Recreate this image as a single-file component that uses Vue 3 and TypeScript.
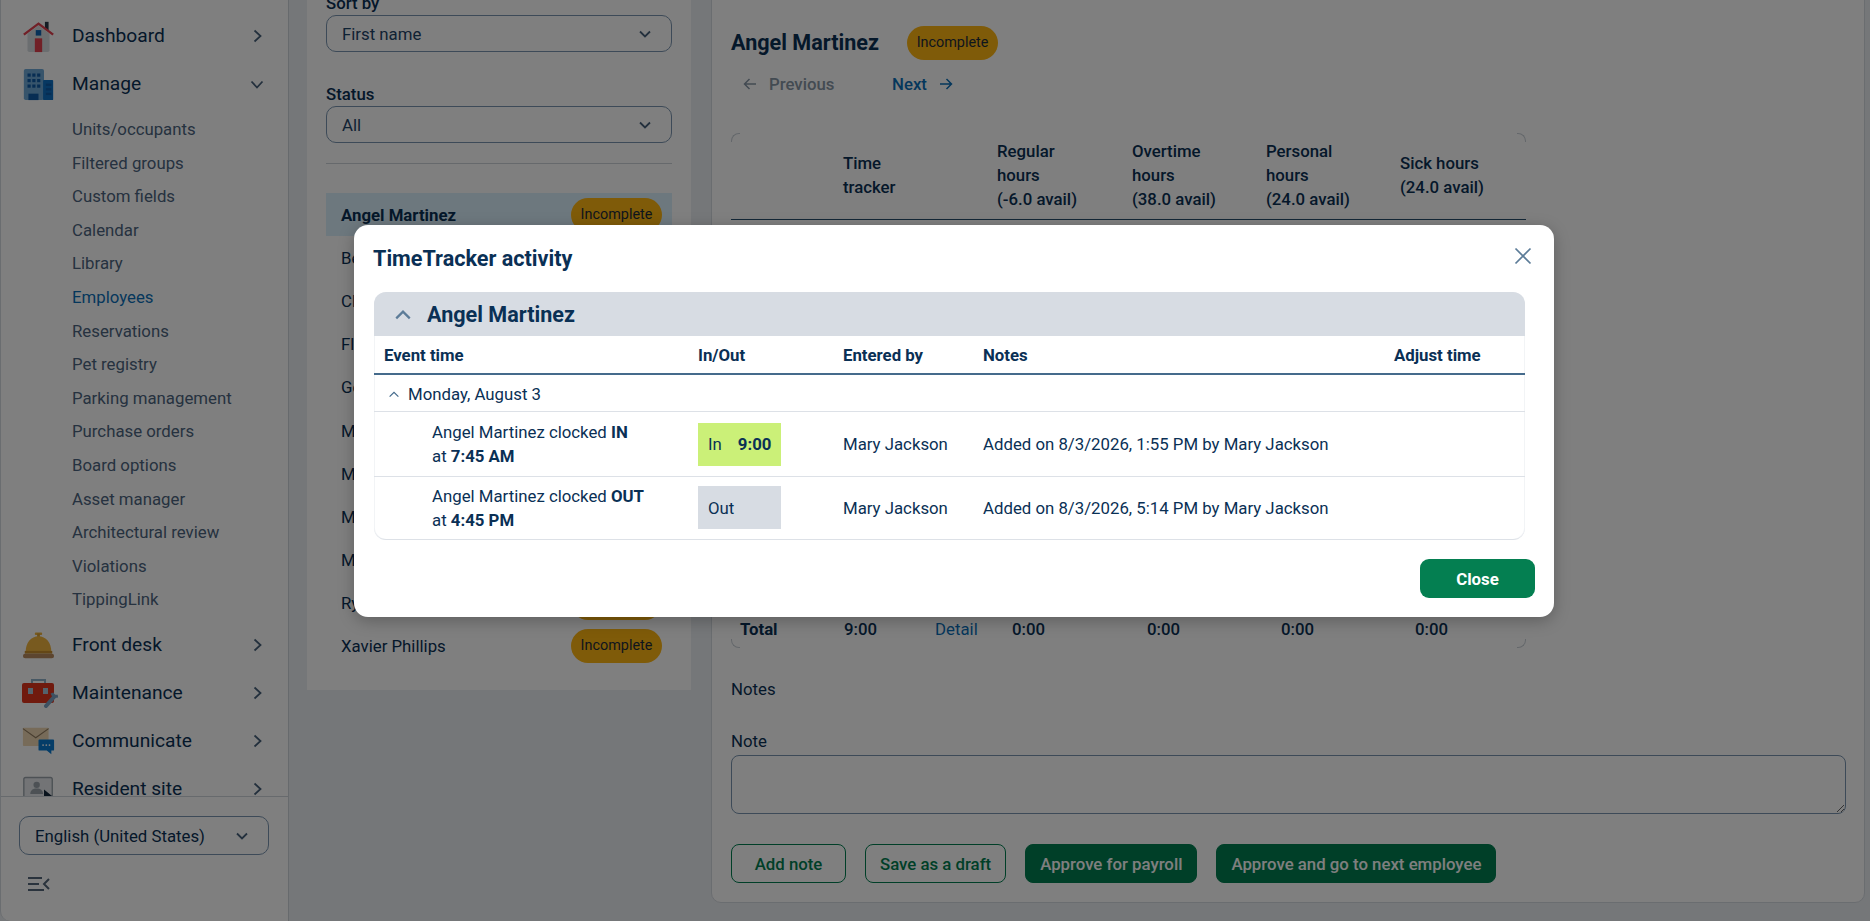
<script setup lang="ts">
const subItems = [
  'Units/occupants', 'Filtered groups', 'Custom fields', 'Calendar', 'Library', 'Employees',
  'Reservations', 'Pet registry', 'Parking management', 'Purchase orders', 'Board options',
  'Asset manager', 'Architectural review', 'Violations', 'TippingLink'
]

const employees = [
  { name: 'Angel Martinez', badge: true },
  { name: 'Beth Sanders', badge: false },
  { name: 'Claire Howard', badge: false },
  { name: 'Floyd Warren', badge: false },
  { name: 'George Evans', badge: false },
  { name: 'Maria Lopez', badge: false },
  { name: 'Mark Stevens', badge: false },
  { name: 'Mary Jackson', badge: false },
  { name: 'Mike Turner', badge: false },
  { name: 'Ryan Cooper', badge: true },
  { name: 'Xavier Phillips', badge: true }
]
</script>

<template>
  <div class="page">
    <aside class="sidebar">
      <nav class="nav">
        <a class="nav-item">
          <svg class="nav-icon" viewBox="0 0 36 36">
            <rect x="25" y="2" width="4" height="9" fill="#2a3a48" />
            <path d="M6 15 18 6l12 9v18a2 2 0 0 1-2 2H8a2 2 0 0 1-2-2z" fill="#d7dce1" />
            <path d="M2 16 18 4l16 12" fill="none" stroke="#e2404f" stroke-width="2.6" />
            <rect x="15" y="11" width="6" height="6" fill="#0f62b0" />
            <rect x="14" y="20" width="8" height="15" fill="#e2404f" />
          </svg>
          <span class="nav-label">Dashboard</span>
          <svg class="chev" viewBox="0 0 16 16"><path d="m5.500 2.500 6 5.500-6 5.500" /></svg>
        </a>
        <a class="nav-item">
          <svg class="nav-icon" viewBox="0 0 36 36">
            <rect x="2" y="1" width="22" height="34" rx="2" fill="#6fa9d6" />
            <rect x="23" y="13" width="11" height="22" rx="1" fill="#0f70c4" />
            <g fill="#0f5aa6">
              <rect x="6" y="6" width="3.500" height="3.500" /><rect x="11.200" y="6" width="3.500" height="3.500" /><rect x="16.500" y="6" width="3.500" height="3.500" />
              <rect x="6" y="12" width="3.500" height="3.500" /><rect x="11.200" y="12" width="3.500" height="3.500" /><rect x="16.500" y="12" width="3.500" height="3.500" />
              <rect x="6" y="18" width="3.500" height="3.500" /><rect x="11.200" y="18" width="3.500" height="3.500" /><rect x="16.500" y="18" width="3.500" height="3.500" />
              <rect x="7" y="28" width="11" height="7" />
              <rect x="26" y="17" width="6" height="2.500" /><rect x="26" y="22" width="6" height="2.500" /><rect x="26" y="27" width="6" height="2.500" />
            </g>
          </svg>
          <span class="nav-label">Manage</span>
          <svg class="chev" viewBox="0 0 16 16"><path d="m2.500 5.500 5.500 6 5.500-6" /></svg>
        </a>
        <ul class="sub-list">
          <li v-for="item in subItems" :key="item" :class="{ active: item === 'Employees' }">{{ item }}</li>
        </ul>
        <a class="nav-item">
          <svg class="nav-icon" viewBox="0 0 36 36">
            <rect x="14" y="5" width="8" height="2.500" rx="1" fill="#f0b53f" />
            <rect x="16.500" y="6" width="3" height="4" fill="#d9a033" />
            <path d="M4 26C4 16 10 9 18 9s14 7 14 17z" fill="#f0b53f" />
            <rect x="3" y="25" width="30" height="3" fill="#c98f2d" />
            <rect x="1" y="28" width="34" height="5" rx="2.500" fill="#b98a5e" />
          </svg>
          <span class="nav-label">Front desk</span>
          <svg class="chev" viewBox="0 0 16 16"><path d="m5.500 2.500 6 5.500-6 5.500" /></svg>
        </a>
        <a class="nav-item">
          <svg class="nav-icon wide" viewBox="0 0 36 30">
            <path d="M10 6V2h13v4" fill="none" stroke="#8fb0c9" stroke-width="2" />
            <rect x="0" y="5" width="32" height="20" rx="2" fill="#e0341d" />
            <rect x="6" y="10" width="5" height="6" fill="#a9c4d8" />
            <rect x="21" y="10" width="5" height="6" fill="#a9c4d8" />
            <path d="M24 28 32 19" stroke="#7ca3c4" stroke-width="4" stroke-linecap="round" />
            <path d="M30 15a4.500 4.500 0 0 0 6 3" fill="none" stroke="#7ca3c4" stroke-width="3" />
          </svg>
          <span class="nav-label">Maintenance</span>
          <svg class="chev" viewBox="0 0 16 16"><path d="m5.500 2.500 6 5.500-6 5.500" /></svg>
        </a>
        <a class="nav-item">
          <svg class="nav-icon" viewBox="0 0 36 36">
            <rect x="1" y="4" width="28" height="20" rx="1" fill="#efd7b2" />
            <path d="m1 5 14 10L29 5" fill="none" stroke="#8f7a5f" stroke-width="1.200" />
            <path d="M19 17h15a1 1 0 0 1 1 1v10a1 1 0 0 1-1 1h-2v4l-5-4h-8a1 1 0 0 1-1-1V18a1 1 0 0 1 1-1z" fill="#0a7ad0" />
            <circle cx="23" cy="23" r="1" fill="#fff" /><circle cx="26.500" cy="23" r="1" fill="#fff" /><circle cx="30" cy="23" r="1" fill="#fff" />
          </svg>
          <span class="nav-label">Communicate</span>
          <svg class="chev" viewBox="0 0 16 16"><path d="m5.500 2.500 6 5.500-6 5.500" /></svg>
        </a>
        <a class="nav-item">
          <svg class="nav-icon" viewBox="0 0 36 36">
            <rect x="2" y="6" width="31" height="22" rx="2" fill="#e6e9ec" stroke="#9aa3ab" stroke-width="1.500" />
            <circle cx="16" cy="14" r="3.500" fill="#9aa3ab" />
            <path d="M9 24c0-4 3-6 7-6s7 2 7 6z" fill="#9aa3ab" />
            <rect x="1" y="27" width="33" height="4" fill="#7c858d" />
            <path d="m24 19 11 9-5 1 3 5-3 1-3-5-3 3z" fill="#12263a" />
          </svg>
          <span class="nav-label">Resident site</span>
          <svg class="chev" viewBox="0 0 16 16"><path d="m5.500 2.500 6 5.500-6 5.500" /></svg>
        </a>
      </nav>
      <div class="side-footer">
        <div class="select lang">
          <span>English (United States)</span>
          <svg class="chev-sm" viewBox="0 0 16 16"><path d="m3 5.500 5 5 5-5" /></svg>
        </div>
        <svg class="collapse" viewBox="0 0 22 16">
          <path d="M0 2h14M0 8h11M0 14h16M21 3l-5 5 5 5" />
        </svg>
      </div>
    </aside>

    <section class="list-panel">
      <label class="field-label">Sort by</label>
      <div class="select">
        <span>First name</span>
        <svg class="chev-sm" viewBox="0 0 16 16"><path d="m3 5.500 5 5 5-5" /></svg>
      </div>
      <label class="field-label status-label">Status</label>
      <div class="select">
        <span>All</span>
        <svg class="chev-sm" viewBox="0 0 16 16"><path d="m3 5.500 5 5 5-5" /></svg>
      </div>
      <hr class="divider" />
      <ul class="employees">
        <li v-for="(emp, i) in employees" :key="emp.name" :class="{ selected: i === 0 }">
          <span>{{ emp.name }}</span>
          <span v-if="emp.badge" class="badge">Incomplete</span>
        </li>
      </ul>
    </section>

    <main class="detail">
      <div class="title-row">
        <h1>Angel Martinez</h1>
        <span class="badge">Incomplete</span>
      </div>
      <div class="pager">
        <a class="prev">
          <svg viewBox="0 0 16 16"><path d="M14 8H2.500M7.500 3l-5 5 5 5" /></svg>
          Previous
        </a>
        <a class="next">
          Next
          <svg viewBox="0 0 16 16"><path d="M2 8h11.500M8.500 3l5 5-5 5" /></svg>
        </a>
      </div>

      <div class="hours">
        <i class="corner tl"></i><i class="corner tr"></i><i class="corner bl"></i><i class="corner br"></i>
        <div class="hours-head">
          <span></span>
          <span>Time<br />tracker</span>
          <span>Regular<br />hours<br />(-6.0 avail)</span>
          <span>Overtime<br />hours<br />(38.0 avail)</span>
          <span>Personal<br />hours<br />(24.0 avail)</span>
          <span>Sick hours<br />(24.0 avail)</span>
        </div>
        <div class="hours-body"></div>
        <div class="hours-row">
          <span class="total-label">Total</span>
          <span class="tracker"><b>9:00</b><a>Detail</a></span>
          <span>0:00</span><span>0:00</span><span>0:00</span><span>0:00</span>
        </div>
      </div>

      <p class="notes-title">Notes</p>
      <label class="note-label">Note</label>
      <textarea class="note"></textarea>
      <div class="actions">
        <button class="btn outline add">Add note</button>
        <button class="btn outline">Save as a draft</button>
        <button class="btn solid">Approve for payroll</button>
        <button class="btn solid">Approve and go to next employee</button>
      </div>
    </main>

    <div class="overlay">
      <div class="modal">
        <header class="modal-head">
          <h2>TimeTracker activity</h2>
          <svg class="close-x" viewBox="0 0 16 16"><path d="m2 2 12 12M14 2 2 14" /></svg>
        </header>
        <div class="activity">
          <div class="person">
            <svg viewBox="0 0 16 16"><path d="m2 11 6-6 6 6" /></svg>
            <span>Angel Martinez</span>
          </div>
          <div class="grid grid-head">
            <span>Event time</span>
            <span>In/Out</span>
            <span>Entered by</span>
            <span>Notes</span>
            <span>Adjust time</span>
          </div>
          <div class="day">
            <svg viewBox="0 0 16 16"><path d="m3 11 5-5 5 5" /></svg>
            <span>Monday, August 3</span>
          </div>
          <div class="grid event">
            <span class="what">Angel Martinez clocked <b>IN</b><br />at <b>7:45 AM</b></span>
            <span class="tag in"><span>In</span><b>9:00</b></span>
            <span>Mary Jackson</span>
            <span>Added on 8/3/2026, 1:55 PM by Mary Jackson</span>
            <span></span>
          </div>
          <div class="grid event">
            <span class="what">Angel Martinez clocked <b>OUT</b><br />at <b>4:45 PM</b></span>
            <span class="tag"><span>Out</span></span>
            <span>Mary Jackson</span>
            <span>Added on 8/3/2026, 5:14 PM by Mary Jackson</span>
            <span></span>
          </div>
        </div>
        <footer class="modal-foot">
          <button class="close-btn">Close</button>
        </footer>
      </div>
    </div>
  </div>
</template>

<style scoped>
.page {
  position: relative;
  display: flex;
  align-items: flex-start;
  width: 1870px;
  height: 921px;
  overflow: hidden;
  background: #eaeef2;
  color: #0a3055;
  font-family: Roboto, "Liberation Sans", sans-serif;
  font-size: 16.8px;
  line-height: 24px;
}

/* sidebar */
.sidebar {
  flex: none;
  display: flex;
  flex-direction: column;
  box-sizing: border-box;
  width: 289px;
  height: 921px;
  background: #fff;
  border-left: 1px solid #d5dae0;
  border-right: 1px solid #cfd5db;
  border-bottom-left-radius: 10px;
}
.nav {
  height: 796px;
  padding-top: 12px;
  box-sizing: border-box;
  overflow: hidden;
}
.nav-item {
  display: flex;
  align-items: center;
  height: 48px;
  padding-left: 21px;
  font-size: 19.2px;
}
.nav-icon {
  flex: none;
  width: 33px;
  height: 33px;
  margin-right: 17px;
}
.nav-icon.wide {
  width: 36px;
  height: 30px;
  margin-right: 14px;
}
.nav-label {
  flex: 1;
}
.chev {
  flex: none;
  width: 16px;
  height: 16px;
  margin-right: 23px;
  fill: none;
  stroke: #47607a;
  stroke-width: 1.8;
}
.sub-list {
  list-style: none;
  margin: 5px 0 4px;
  padding: 0 0 0 71px;
}
.sub-list li {
  height: 33.6px;
  line-height: 33.6px;
  color: #4c6480;
}
.sub-list li.active {
  color: #0b6fb8;
}
.side-footer {
  flex: 1;
  border-top: 1px solid #cfd5db;
  padding: 19px 19px 0 18px;
}
.select {
  display: flex;
  align-items: center;
  justify-content: space-between;
  box-sizing: border-box;
  height: 37px;
  padding: 0 18px 0 15px;
  border: 1px solid #7b95b0;
  border-radius: 10px;
  background: #fff;
  color: #1f4468;
}
.select.lang {
  width: 250px;
  height: 39px;
  color: #0a3055;
}
.chev-sm {
  width: 16px;
  height: 16px;
  fill: none;
  stroke: #47607a;
  stroke-width: 1.8;
}
.collapse {
  display: block;
  width: 22px;
  height: 16px;
  margin: 21px 0 0 9px;
  fill: none;
  stroke: #55677a;
  stroke-width: 2;
}

/* employee list */
.list-panel {
  flex: none;
  box-sizing: border-box;
  width: 384px;
  height: 750px;
  margin: -60px 0 0 18px;
  padding: 51px 19px 0;
  background: #fff;
}
.field-label {
  display: block;
  font-weight: 500;
}
.status-label {
  margin-top: 30px;
}
.divider {
  height: 1px;
  margin: 20px 0 29px;
  border: 0;
  background: #ccd2d8;
}
.employees {
  list-style: none;
  margin: 0;
  padding: 0;
}
.employees li {
  display: flex;
  align-items: center;
  justify-content: space-between;
  height: 43.2px;
  padding: 0 10px 0 15px;
}
.employees li.selected {
  background: #dbf1fd;
  font-weight: 700;
}
.badge {
  display: inline-flex;
  align-items: center;
  justify-content: center;
  box-sizing: border-box;
  width: 91px;
  height: 34px;
  border-radius: 17px;
  background: #ffb612;
  color: #1d2c3a;
  font-size: 14.4px;
  font-weight: 400;
}

/* detail card */
.detail {
  flex: none;
  box-sizing: border-box;
  width: 1154px;
  margin: -60px 0 0 20px;
  padding: 85px 18px 19px 19px;
  background: #fff;
  border: 1px solid #d5dae0;
  border-radius: 10px;
}
.title-row {
  display: flex;
  align-items: center;
  gap: 28px;
}
h1 {
  margin: 0;
  font-size: 21.6px;
  font-weight: 700;
  line-height: 34px;
}
.pager {
  display: flex;
  margin: 12px 0 0 11px;
  font-weight: 500;
}
.pager a {
  display: flex;
  align-items: center;
  gap: 11px;
}
.pager svg {
  width: 16px;
  height: 16px;
  fill: none;
  stroke: currentColor;
  stroke-width: 1.5;
}
.prev {
  color: #8796a5;
  width: 150px;
}
.next {
  color: #0b6fb8;
}
.hours {
  position: relative;
  width: 795px;
  margin: 37px 0 0;
}
.corner {
  position: absolute;
  width: 8px;
  height: 8px;
  border: 0 solid #c8cfd6;
}
.tl { left: 0; top: 0; border-width: 1px 0 0 1px; border-top-left-radius: 8px; }
.tr { right: 0; top: 0; border-width: 1px 1px 0 0; border-top-right-radius: 8px; }
.bl { left: 0; bottom: 0; border-width: 0 0 1px 1px; border-bottom-left-radius: 8px; }
.br { right: 0; bottom: 0; border-width: 0 1px 1px 0; border-bottom-right-radius: 8px; }
.hours-head {
  display: grid;
  grid-template-columns: 112px 154px 135px 134px 134px 126px;
  align-items: center;
  box-sizing: border-box;
  height: 87px;
  padding-bottom: 2px;
  border-bottom: 1px solid #28506f;
  font-weight: 500;
}
.hours-body {
  height: 389px;
}
.hours-row {
  display: grid;
  grid-template-columns: 104px 168px 135px 134px 134px 110px;
  align-items: center;
  height: 39px;
  padding-left: 9px;
  font-weight: 500;
}
.total-label {
  font-weight: 700;
}
.tracker {
  display: flex;
  gap: 58px;
}
.tracker b {
  font-weight: 500;
}
.tracker a {
  color: #0b6fb8;
  font-weight: 400;
}
.notes-title {
  margin: 29px 0 0;
}
.note-label {
  display: block;
  margin-top: 28px;
}
.note {
  display: block;
  box-sizing: border-box;
  width: 1115px;
  height: 59px;
  margin-top: 2px;
  border: 1px solid #7b95b0;
  border-radius: 8px;
  background: #fff;
}
.actions {
  display: flex;
  gap: 19px;
  margin-top: 30px;
}
.btn {
  box-sizing: border-box;
  height: 39px;
  padding: 0 14px;
  border-radius: 8px;
  font-family: inherit;
  font-size: 16.8px;
  font-weight: 500;
}
.btn.outline {
  border: 1px solid #007f50;
  background: #fff;
  color: #007f50;
}
.btn.add {
  min-width: 115px;
}
.btn.solid {
  border: 1px solid #007f50;
  background: #007f50;
  color: #fff;
}

/* modal */
.overlay {
  position: absolute;
  inset: 0;
  background: rgba(0, 0, 0, 0.5);
}
.modal {
  position: absolute;
  left: 354px;
  top: 225px;
  box-sizing: border-box;
  width: 1200px;
  height: 392px;
  padding: 0 20px 0;
  border-radius: 14px;
  background: #fff;
  box-shadow: 0 4px 16px rgba(0, 0, 0, 0.25);
}
.modal-head {
  display: flex;
  align-items: center;
  justify-content: space-between;
  height: 67px;
}
h2 {
  margin: 0 0 0 -1px;
  font-size: 21.6px;
  font-weight: 700;
}
.close-x {
  width: 20px;
  height: 20px;
  margin: -5px 1px 0 0;
  fill: none;
  stroke: #5c7c98;
  stroke-width: 1.4;
}
.activity {
  width: 1151px;
  border-bottom: 1px solid #dde1e7;
  border-radius: 12px;
  box-shadow: inset -1px 0 0 #f2f4f6, inset 1px 0 0 #f2f4f6;
}
.person {
  display: flex;
  align-items: center;
  box-sizing: border-box;
  height: 44px;
  padding: 2px 0 0 20px;
  border-radius: 12px 12px 0 0;
  background: #d7dce3;
  font-size: 21.6px;
  font-weight: 700;
}
.person svg {
  width: 18px;
  height: 18px;
  margin-right: 15px;
  fill: none;
  stroke: #5c7c98;
  stroke-width: 2;
}
.grid {
  display: grid;
  grid-template-columns: 314px 145px 140px 411px 141px;
  align-items: center;
}
.grid > span {
  padding-left: 10px;
}
.grid-head {
  height: 39px;
  border-bottom: 2px solid #456b8c;
  box-sizing: border-box;
  font-weight: 700;
}
.day {
  display: flex;
  align-items: center;
  height: 37px;
  padding: 2px 0 0 13px;
  border-bottom: 1px solid #dde1e7;
  box-sizing: border-box;
}
.day svg {
  width: 14px;
  height: 14px;
  margin-right: 7px;
  fill: none;
  stroke: #456b8c;
  stroke-width: 1.4;
}
.event {
  height: 64px;
  box-sizing: border-box;
}
.event + .event {
  border-top: 1px solid #dde1e7;
  height: 63px;
}
.what.what {
  padding-left: 58px;
}
.what b,
.tag b {
  font-weight: 700;
}
.grid > .tag {
  display: flex;
  align-items: center;
  gap: 16px;
  box-sizing: border-box;
  width: 83px;
  height: 43px;
  margin-left: 10px;
  padding-left: 10px;
  background: #d7dce3;
}
.event + .event > .tag {
  margin-top: -1px;
}
.grid > .tag.in {
  background: #cbf078;
}
.modal-foot {
  display: flex;
  justify-content: flex-end;
  margin: 19px -1px 0 0;
}
.close-btn {
  width: 115px;
  height: 39px;
  border: 0;
  border-radius: 9px;
  background: #047f51;
  color: #fff;
  font-family: inherit;
  font-size: 16.8px;
  font-weight: 700;
}
</style>
